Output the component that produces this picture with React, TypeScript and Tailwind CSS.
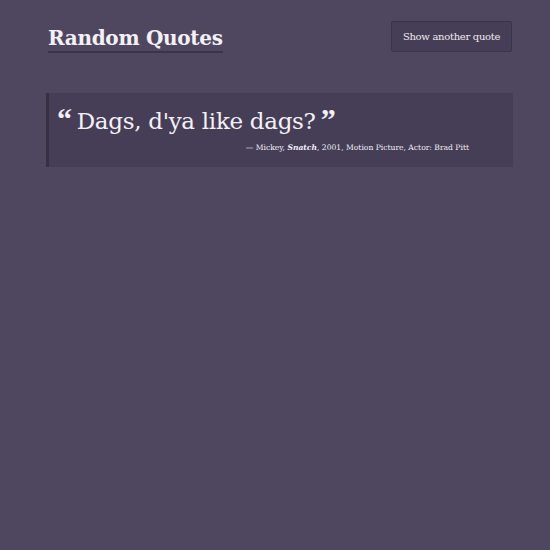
export default function App() {
  const quote = {
    text: "Dags, d'ya like dags?",
    character: "Mickey",
    title: "Snatch",
    year: 2001,
    medium: "Motion Picture",
    actor: "Brad Pitt",
  };

  return (
    <div className="min-h-[550px] bg-[#4f4760] text-[#f3f1f6] [font-family:'DejaVu_Serif','Liberation_Serif',serif]">
      <div className="px-12 pt-[21px]">
        {/* Header */}
        <header className="flex items-start justify-between">
          <h1 className="mt-[5px] border-b-2 border-[#3b3449] text-[20px] font-bold leading-[25px] tracking-[-0.3px] [font-family:'DejaVu_Serif',serif]">
            Random Quotes
          </h1>
          <button className="-mr-[10px] h-[31px] w-[121px] rounded-[2px] border border-[#3c3549] bg-[#463e56] text-[10px] tracking-[-0.3px] text-[#eeebf2] [font-family:'DejaVu_Serif',serif]">
            Show another quote
          </button>
        </header>

        {/* Quote */}
        <blockquote className="-ml-[2px] -mr-[11px] mt-[40px] border-l-[3px] border-[#363042] bg-[#463e56] pb-[13px] pl-[8px] pr-[44px] pt-[11px]">
          <p className="text-[23px] leading-[34px] tracking-[-0.3px] [font-family:'DejaVu_Serif',serif]">
            <span className="mr-[5px] text-[30px] font-bold leading-[0] [font-family:'Liberation_Serif',serif]">&ldquo;</span>
            {quote.text}
            <span className="ml-[5px] text-[30px] font-bold leading-[0] [font-family:'Liberation_Serif',serif]">&rdquo;</span>
          </p>
          <footer className="mt-[4px] text-right text-[7.6px] leading-[12px] [font-family:'DejaVu_Serif',serif]">
            &mdash; {quote.character}, <em className="font-bold">{quote.title}</em>, {quote.year}, {quote.medium}, Actor: {quote.actor}
          </footer>
        </blockquote>
      </div>
    </div>
  );
}
